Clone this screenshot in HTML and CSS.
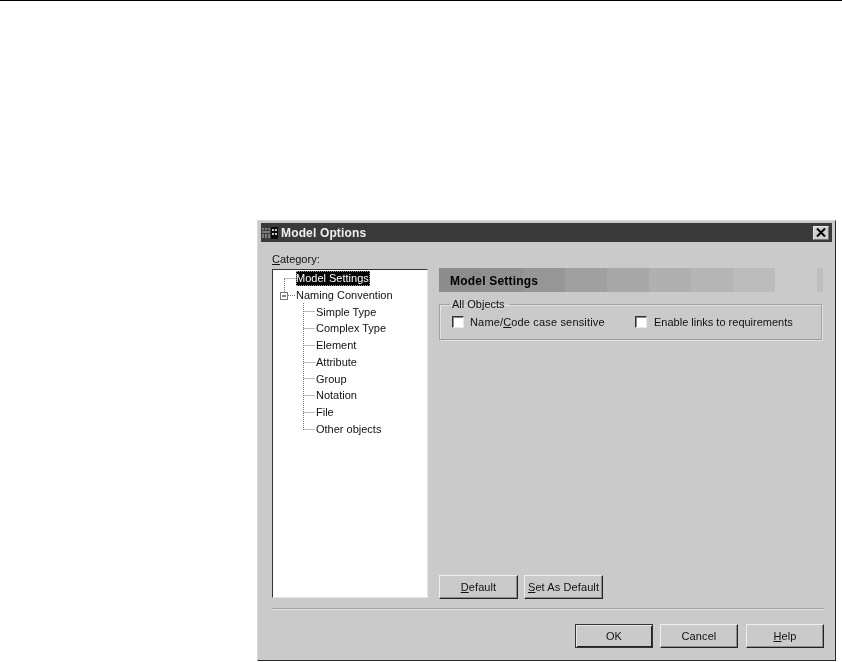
FILE: index.html
```html
<!DOCTYPE html>
<html lang="en">
<head>
<meta charset="utf-8">
<title>Model Options</title>
<link rel="stylesheet" href="styles.css">
</head>
<body>
<div class="rule"></div>
<main class="dialog">
  <header class="titlebar">
    <svg class="app-icon" width="16" height="14" viewBox="0 0 16 14">
      <path d="M0 2h2v2H0zM3 2h2v2H3zM6 2h2v2H6zM0 5h8v2H0zM0 8h2v4H0zM3 8h2v4H3zM6 8h2v4H6z" fill="#7c7c7c"/>
      <path d="M9 1h7v12H9z" fill="#0c0c0c"/>
      <path d="M10 3h2v2h-2zM13 3h2v2h-2zM10 7h2v2h-2zM13 7h2v2h-2z" fill="#c8c8c8"/>
    </svg>
    <span class="title">Model Options</span>
    <button class="close" type="button" aria-label="Close">
      <svg width="10" height="9" viewBox="0 0 10 9"><path d="M1 0.500l8 8M9 0.500l-8 8" stroke="#000" stroke-width="2" fill="none"/></svg>
    </button>
  </header>
  <div class="content">
    <div class="left">
      <label class="category"><u>C</u>ategory:</label>
      <div class="tree">
        <svg class="connectors" width="60" height="170" viewBox="0 0 60 170">
          <path d="M11.500 9v13M11.500 8.500h11M15 25.500h7M30.500 33v127M30.500 41.500h12M30.500 58.500h12M30.500 75.500h12M30.500 92.500h12M30.500 108.500h12M30.500 125.500h12M30.500 142.500h12M30.500 159.500h12" stroke="#777" stroke-dasharray="1 1" fill="none"/>
          <rect x="7.500" y="22.500" width="7" height="7" fill="#fff" stroke="#777"/>
          <path d="M9 26h4" stroke="#000"/>
        </svg>
        <div class="node top"><span class="selected">Model Settings</span></div>
        <div class="node top">Naming Convention</div>
        <div class="node child">Simple Type</div>
        <div class="node child">Complex Type</div>
        <div class="node child">Element</div>
        <div class="node child">Attribute</div>
        <div class="node child">Group</div>
        <div class="node child">Notation</div>
        <div class="node child">File</div>
        <div class="node child">Other objects</div>
      </div>
    </div>
    <div class="right">
      <div class="band">
        <div class="band-title">Model Settings</div>
        <div class="band-sliver"></div>
      </div>
      <fieldset class="group">
        <legend>All Objects</legend>
        <label class="check first"><span class="box"></span><span class="wide">Name/<u>C</u>ode case sensitive</span></label>
        <label class="check second"><span class="box"></span><span>Enable links to requirements</span></label>
      </fieldset>
      <div class="spacer"></div>
      <div class="tools">
        <button class="btn" type="button"><u>D</u>efault</button>
        <button class="btn" type="button"><u>S</u>et As Default</button>
      </div>
    </div>
  </div>
  <div class="separator"></div>
  <footer class="actions">
    <button class="btn primary" type="button">OK</button>
    <button class="btn" type="button">Cancel</button>
    <button class="btn help" type="button"><u>H</u>elp</button>
  </footer>
</main>
</body>
</html>
```
FILE: styles.css
```css
* { box-sizing: border-box; }
html, body { margin: 0; padding: 0; background: #fff; }
body { width: 842px; height: 662px; overflow: hidden; font-family: "Liberation Sans", Arial, sans-serif; font-size: 11px; color: #111; }
.rule { height: 1px; background: #000; }
u { text-underline-offset: 1px; }

.dialog {
  width: 579px;
  height: 441px;
  margin: 219px 0 0 257px;
  padding: 2px 3px 0 3px;
  display: flex;
  flex-direction: column;
  background-color: #cacaca;
  background-image: repeating-conic-gradient(#c7c7c7 0 25%, #cdcdcd 0 50%);
  background-size: 2px 2px;
  border: 1px solid;
  border-color: #d8d8d8 #2a2a2a #2a2a2a #d8d8d8;
  filter: blur(0.35px);
}
.titlebar {
  height: 19px;
  flex: none;
  display: flex;
  align-items: center;
  padding: 0 3px 0 1px;
  background: #3a3a3a;
  color: #eee;
}
.app-icon { flex: none; margin-right: 3px; }
.title { font-weight: 700; font-size: 12px; letter-spacing: 0.15px; flex: 1; }
.close {
  width: 16px; height: 14px; padding: 0; display: flex; align-items: center; justify-content: center;
  background: #cfcfcf; border: 1px solid; border-color: #e6e6e6 #777 #777 #e6e6e6;
}

.content { flex: 1; display: flex; padding: 12px 10px 0 11px; gap: 11px; min-height: 0; }
.left { width: 156px; display: flex; flex-direction: column; flex: none; }
.category { height: 15px; line-height: 11px; flex: none; }
.tree {
  position: relative;
  height: 329px;
  flex: none;
  background: #fff;
  border: 1px solid;
  border-color: #333 #e6e6e6 #e6e6e6 #333;
}
.connectors { position: absolute; left: 0; top: 0; }
.node { height: 16.750px; line-height: 16.750px; white-space: nowrap; position: relative; }
.top { padding-left: 23px; }
.child { padding-left: 43px; }
.selected { display: inline-block; height: 15px; line-height: 15px; background: #000; color: #fff; outline: 1px dotted #999; outline-offset: -1px; padding: 0 1px 0 0; }

.right { flex: 1; display: flex; flex-direction: column; min-width: 0; }
.band {
  height: 24px;
  flex: none;
  margin-top: 14px;
  display: flex;
  justify-content: space-between;
  background: linear-gradient(90deg,
    #8c8c8c 0 42px, #919191 0 84px, #969696 0 126px, #a0a0a0 0 168px,
    #a7a7a7 0 210px, #b0b0b0 0 252px, #b5b5b5 0 294px, #bcbcbc 0 336px, transparent 0);
}
.band-title { font-weight: 700; font-size: 12px; letter-spacing: 0.2px; line-height: 26px; padding-left: 11px; color: #000; }
.band-sliver { width: 6px; margin-right: -1px; background: #bebebe; }

.group {
  height: 42px;
  flex: none;
  margin: 6px 0 0;
  padding: 0 0 0 12px;
  display: flex;
  align-items: flex-start;
  border: 1px solid #a2a2a2;
  border-bottom-color: #9a9a9a;
  box-shadow: inset 1px 1px 0 #e2e2e2, 1px 1px 0 #e2e2e2;
}
.group legend { padding: 0 4px 0 2px; margin-left: -2px; line-height: 13px; }
.check { display: flex; align-items: center; gap: 6px; height: 15px; margin-top: 3px; white-space: nowrap; }
.check.first { width: 183px; }
.check.second { gap: 7px; }
.wide { letter-spacing: 0.16px; }
.box { width: 12px; height: 12px; flex: none; background: #fff; border: 1px solid; border-color: #333 #e8e8e8 #e8e8e8 #333; box-shadow: inset 1px 1px 0 #888; }

.spacer { flex: 1; }
.tools { display: flex; gap: 6px; margin-bottom: -1px; }

.btn {
  width: 79px;
  height: 24px;
  padding: 0;
  font: inherit;
  letter-spacing: 0.1px;
  color: #111;
  background: transparent;
  border: 1px solid;
  border-color: #eee #222 #222 #eee;
  box-shadow: inset -1px -1px 0 #8c8c8c;
}
.primary { border-color: #333; box-shadow: inset 1px 1px 0 #e8e8e8, inset -1px -1px 0 #222; }

.separator { flex: none; height: 2px; margin: 10px 8px 0 11px; background: #a4a4a4; border-bottom: 1px solid #e0e0e0; }
.actions { flex: none; display: flex; justify-content: flex-end; gap: 7px; padding: 14px 8px 12px 0; }
.actions .btn { width: 78px; }
.help { margin-left: 1px; }
```
